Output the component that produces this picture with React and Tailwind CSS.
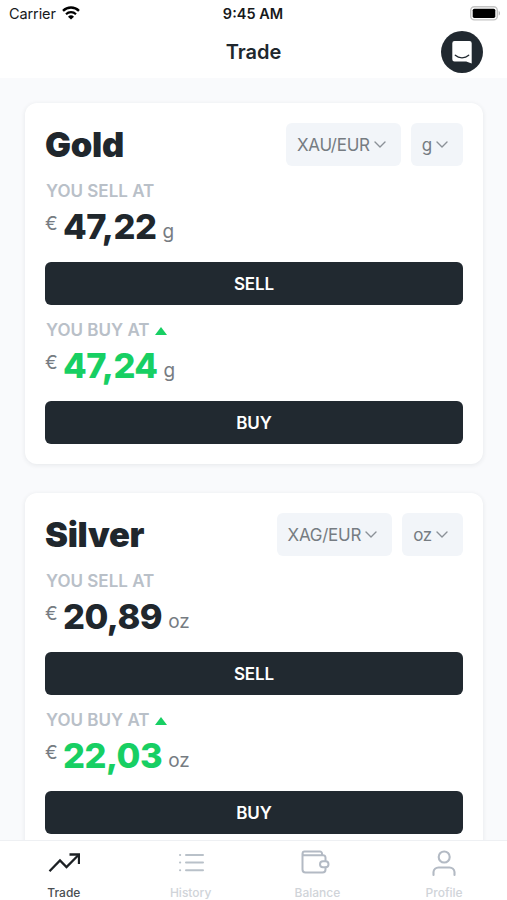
import React from "react";

const markets = [
  { name: "Gold", pair: "XAU/EUR", unit: "g", sell: "47,22", buy: "47,24" },
  { name: "Silver", pair: "XAG/EUR", unit: "oz", sell: "20,89", buy: "22,03" },
];

const Chevron = () => (
  <svg className="w-3 h-2" viewBox="0 0 12 8" fill="none" stroke="#8b9197" strokeWidth="1.4" strokeLinecap="round" strokeLinejoin="round">
    <path d="M1 1l5 5 5-5" />
  </svg>
);

const Select = ({ children }) => (
  <button className="h-[43px] pl-[11px] pr-[15px] flex items-center gap-1 rounded-md bg-[#f2f5f9] text-[17px] tracking-[-0.25px] text-[#767c82]">
    <span className="pt-0.5">{children}</span>
    <Chevron />
  </button>
);

const Price = ({ label, value, unit, up }) => (
  <div className="h-24 pt-[15px]">
    <div className="h-[22px] pl-px flex items-center gap-[5px] text-[17px] font-semibold text-[#b9c0c8]">
      {label}
      {up && (
        <svg className="w-3 h-2" viewBox="0 0 12 8">
          <path d="M6 0l6 8H0z" fill="#17cf63" />
        </svg>
      )}
    </div>
    <div className="h-12 flex items-center text-[#767c82]">
      <span className="w-[18px] text-[19px] leading-none pb-2">€</span>
      <span className={up ? "text-[34.5px] font-extrabold tracking-[-0.5px] text-[#17cf63]" : "text-[34.5px] font-extrabold tracking-[-0.5px] text-[#20272d]"}>
        {value}
      </span>
      <span className="ml-1.5 text-[19px] leading-none pt-[9px]">{unit}</span>
    </div>
  </div>
);

const Action = ({ children }) => (
  <button className="w-full h-[43px] pt-0.5 rounded-md bg-[#212930] text-white text-[17px] font-semibold tracking-[-0.1px]">
    {children}
  </button>
);

const MarketCard = ({ market }) => (
  <div className="px-5 pt-5 pb-5 bg-white rounded-xl shadow-[0_1px_5px_rgba(30,40,60,0.09)]">
    <div className="flex justify-between items-center">
      <h2 className="text-[34.5px] leading-[43px] font-black tracking-[-0.3px] text-[#20272d]">{market.name}</h2>
      <div className="flex gap-2.5">
        <Select>{market.pair}</Select>
        <Select>{market.unit}</Select>
      </div>
    </div>
    <Price label="YOU SELL AT" value={market.sell} unit={market.unit} />
    <Action>SELL</Action>
    <Price label="YOU BUY AT" value={market.buy} unit={market.unit} up />
    <Action>BUY</Action>
  </div>
);

const StatusBar = () => (
  <div className="h-7 pl-[9px] pr-[6px] grid grid-cols-3 items-center text-[#17191b]">
    <div className="flex items-center gap-1.5 text-[14.5px] tracking-[-0.1px]">
      Carrier
      <svg className="w-[18px] h-[14px] mb-0.5" viewBox="0 0 18 14">
        <path d="M1 4.8a11.5 11.5 0 0 1 16 0" fill="none" stroke="#000" strokeWidth="2.4" />
        <path d="M4 8.2a7.2 7.2 0 0 1 10 0" fill="none" stroke="#000" strokeWidth="2.2" />
        <path d="M9 13.6L6 10.7a4.4 4.4 0 0 1 6 0z" fill="#000" />
      </svg>
    </div>
    <div className="pr-1 text-center text-[14.5px] font-semibold">9:45 AM</div>
    <svg className="w-[31px] h-[15px] mb-px justify-self-end" viewBox="0 0 31 15">
      <rect x="0.7" y="0.7" width="26.6" height="13.2" rx="3.6" fill="#fff" stroke="#c4c4c4" strokeWidth="1.4" />
      <rect x="2.7" y="2.7" width="22.6" height="9.2" rx="1.6" fill="#000" />
      <path d="M28.7 5v4.6c1.7-.6 1.7-4 0-4.6z" fill="#b5b5b5" />
    </svg>
  </div>
);

const Header = () => (
  <div className="h-[50px] pr-6 pb-0.5 grid grid-cols-[1fr_auto_1fr] items-center">
    <span />
    <h1 className="pl-6 text-xl font-semibold text-[#20272d]">Trade</h1>
    <button className="w-[42px] h-[42px] justify-self-end flex items-center justify-center rounded-full bg-[#212930]">
      <svg className="w-[22px] h-6" viewBox="0 0 22 24">
        <path d="M3.5 1h15a2.2 2.2 0 0 1 2.2 2.2V23.6l-5.500-2.200H3.500a2.200 2.200 0 0 1-2.200-2.200v-16A2.200 2.200 0 0 1 3.500 1z" fill="#fff" />
        <path d="M4.300 15.300c3.600 3.300 9.800 3.300 13.400 0" fill="none" stroke="#212930" strokeWidth="1.3" strokeLinecap="round" />
      </svg>
    </button>
  </div>
);

const tabs = [
  {
    label: "Trade",
    active: true,
    icon: (
      <g stroke="#1c2024" strokeWidth="2.3" strokeLinecap="butt" strokeLinejoin="miter">
        <path d="M1.5 22.2L12 11.5l6.500 6.500L30 6.500" />
        <path d="M21.500 5.500H31V15" />
      </g>
    ),
  },
  {
    label: "History",
    icon: (
      <g stroke="#b9c1c9" strokeWidth="2">
        <path d="M11 6h17M11 13.600h17M11 21.200h17" />
        <path d="M5 6h.2M5 13.600h.2M5 21.200h.2" />
      </g>
    ),
  },
  {
    label: "Balance",
    icon: (
      <g stroke="#b3bac4" strokeWidth="2">
        <path d="M24.500 11.500V8.500a2.500 2.500 0 0 0-2.500-2.200H3.500a1.900 1.900 0 0 1 0-3.800h15.500a2 2 0 0 1 2 2v1.500M1.500 4.500v16a3 3 0 0 0 3 3h17a3 3 0 0 0 3-3v-2" />
        <rect x="19" y="12.200" width="8.500" height="6" rx="3" />
      </g>
    ),
  },
  {
    label: "Profile",
    icon: (
      <g stroke="#b3bac4" strokeWidth="2.100">
        <circle cx="16.200" cy="8" r="5.500" />
        <path d="M5.500 26v-3a5 5 0 0 1 5-4.500h11a5 5 0 0 1 5 4.500v3" />
      </g>
    ),
  },
];

const TabBar = () => (
  <nav className="h-[60px] shrink-0 grid grid-cols-4 bg-white border-t border-[#eef0f3]">
    {tabs.map((tab) => (
      <div key={tab.label} className="pt-2 pl-px flex flex-col items-center">
        <svg className="w-8 h-7" viewBox="0 0 32 28" fill="none" strokeLinecap="round" strokeLinejoin="round">
          {tab.icon}
        </svg>
        <span className={tab.active ? "mt-2 text-xs leading-4 font-medium text-[#4a4e52]" : "mt-2 text-xs leading-4 font-medium text-[#d0d4d9]"}>
          {tab.label}
        </span>
      </div>
    ))}
  </nav>
);

const App = () => {
  return (
    <div className="w-full h-screen flex flex-col overflow-hidden bg-[#f9fafc] font-['Inter',sans-serif]">
      <div className="shrink-0 bg-white">
        <StatusBar />
        <Header />
      </div>
      <main className="flex-1 min-h-0 overflow-hidden pl-[25px] pr-6 pt-[25px] flex flex-col gap-[29px]">
        {markets.map((market) => (
          <MarketCard key={market.name} market={market} />
        ))}
      </main>
      <TabBar />
    </div>
  );
};

export default App;
